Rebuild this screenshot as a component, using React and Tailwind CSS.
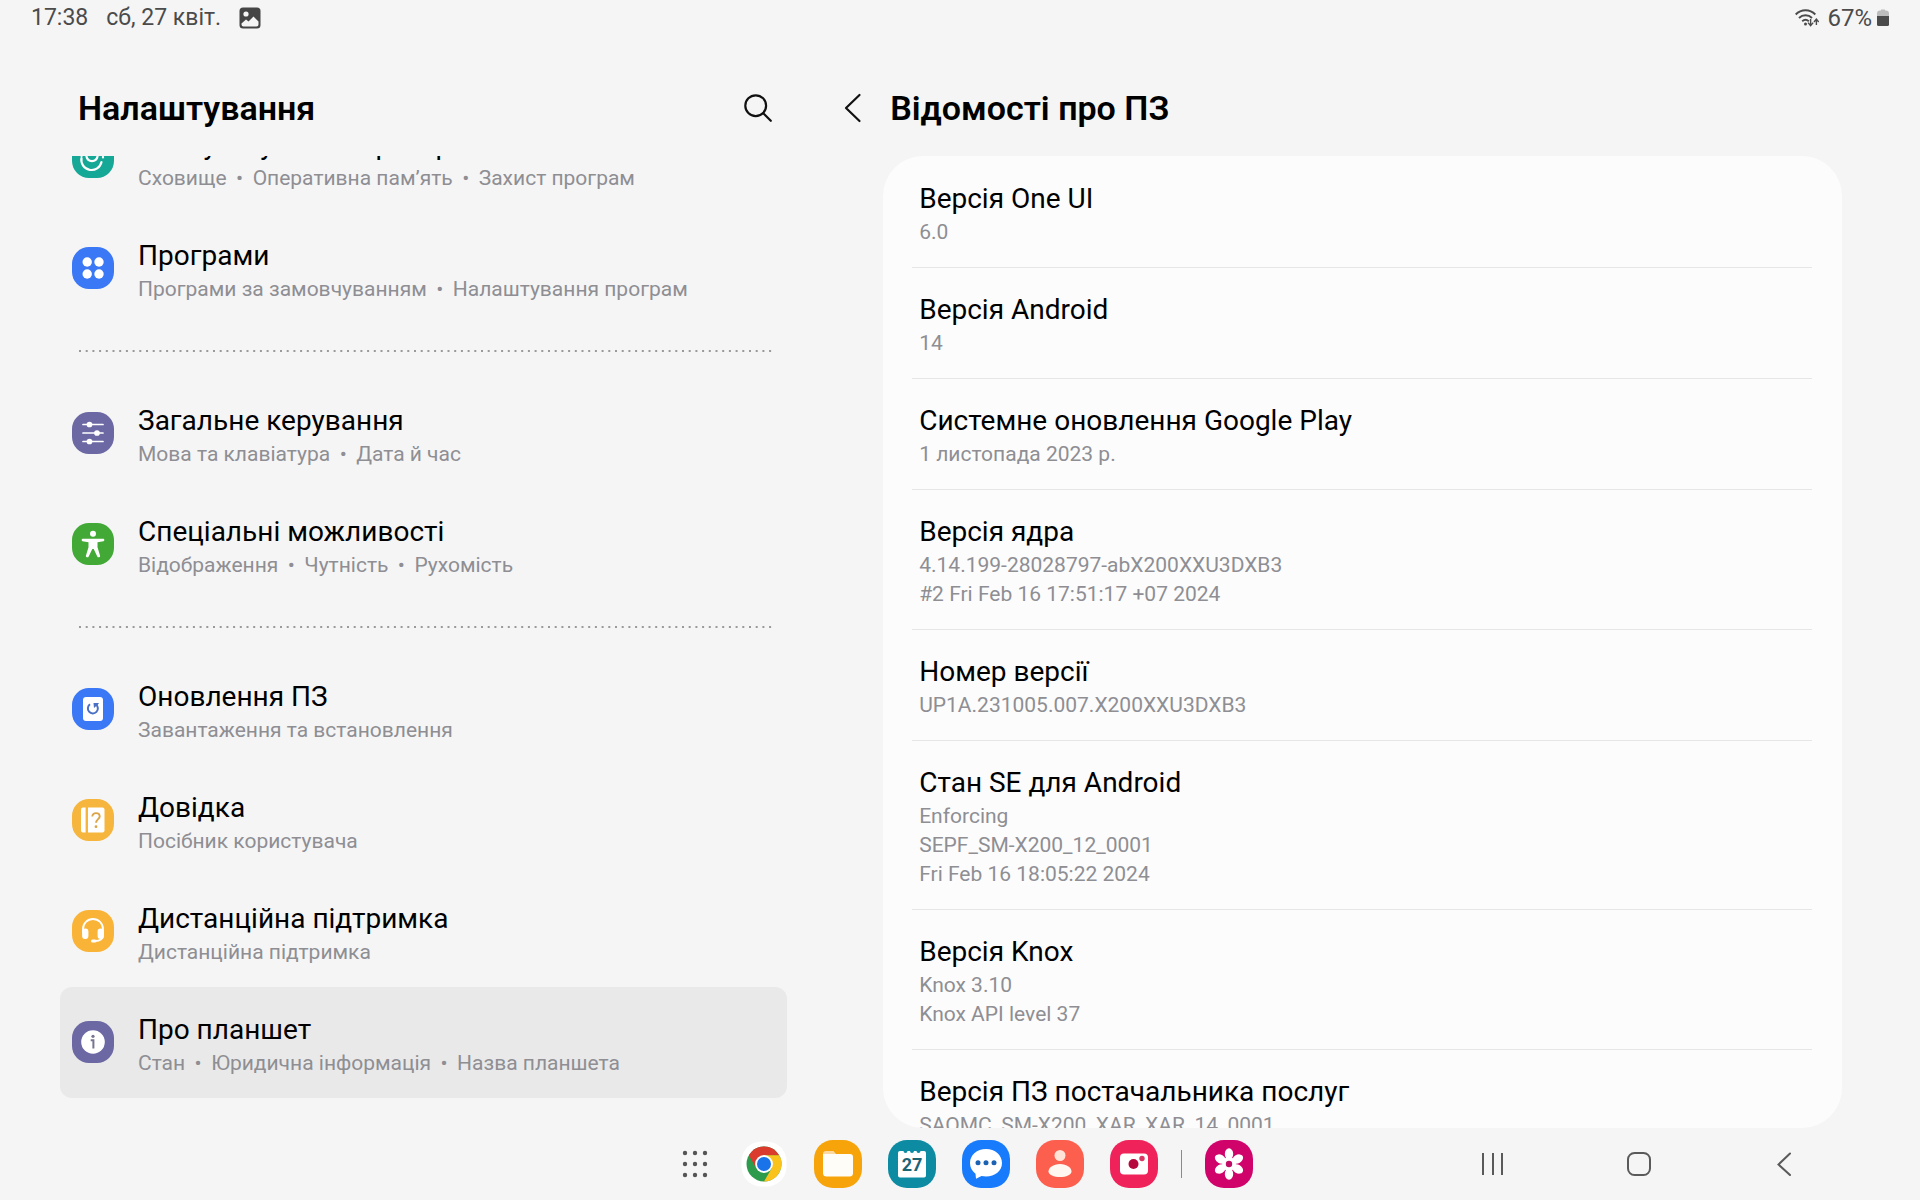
import React from 'react';

const settings = [
  {
    title: 'Обслуговування пристрою',
    details: ['Сховище', 'Оперативна памʼять', 'Захист програм'],
    color: 'bg-[#16a896]',
    icon: 'care',
  },
  {
    title: 'Програми',
    details: ['Програми за замовчуванням', 'Налаштування програм'],
    color: 'bg-[#3a78f6]',
    icon: 'apps',
    divider: true,
  },
  {
    title: 'Загальне керування',
    details: ['Мова та клавіатура', 'Дата й час'],
    color: 'bg-[#6b68a3]',
    icon: 'sliders',
  },
  {
    title: 'Спеціальні можливості',
    details: ['Відображення', 'Чутність', 'Рухомість'],
    color: 'bg-[#43a936]',
    icon: 'accessibility',
    divider: true,
  },
  {
    title: 'Оновлення ПЗ',
    details: ['Завантаження та встановлення'],
    color: 'bg-[#3a78f6]',
    icon: 'update',
  },
  {
    title: 'Довідка',
    details: ['Посібник користувача'],
    color: 'bg-[#f6b53c]',
    icon: 'manual',
  },
  {
    title: 'Дистанційна підтримка',
    details: ['Дистанційна підтримка'],
    color: 'bg-[#f9b438]',
    icon: 'support',
  },
  {
    title: 'Про планшет',
    details: ['Стан', 'Юридична інформація', 'Назва планшета'],
    color: 'bg-[#6b68a3]',
    icon: 'info',
    active: true,
  },
];

const software = [
  { title: 'Версія One UI', lines: ['6.0'] },
  { title: 'Версія Android', lines: ['14'] },
  { title: 'Системне оновлення Google Play', lines: ['1 листопада 2023 р.'] },
  { title: 'Версія ядра', lines: ['4.14.199-28028797-abX200XXU3DXB3', '#2 Fri Feb 16 17:51:17 +07 2024'] },
  { title: 'Номер версії', lines: ['UP1A.231005.007.X200XXU3DXB3'] },
  { title: 'Стан SE для Android', lines: ['Enforcing', 'SEPF_SM-X200_12_0001', 'Fri Feb 16 18:05:22 2024'] },
  { title: 'Версія Knox', lines: ['Knox 3.10', 'Knox API level 37'] },
  { title: 'Версія ПЗ постачальника послуг', lines: ['SAOMC_SM-X200_XAR_XAR_14_0001'] },
];

// 42x42 glyphs, drawn in white on the coloured tile
const glyphs = {
  care: (
    <g fill="none" stroke="#fff" strokeWidth="2.2" strokeLinecap="round">
      <path d="M9.5 22a10.2 10.2 0 0 0 20 4" />
      <path d="M14.500 20.500a5.600 5.600 0 0 0 11 0" />
      <path d="M9.500 20a10.200 10.200 0 0 1 18 -5" />
      <path d="M31 21v.5" />
    </g>
  ),
  apps: (
    <g fill="#fff">
      <circle cx="15.200" cy="15" r="4.700" />
      <circle cx="27" cy="15" r="4.700" />
      <circle cx="15.200" cy="27" r="4.700" />
      <circle cx="27" cy="27" r="4.700" />
    </g>
  ),
  sliders: (
    <g fill="#fff" stroke="#fff" strokeWidth="1.700" strokeLinecap="round">
      <path d="M11 12.500h20M11 21h20M11 29.500h20" />
      <circle cx="17.500" cy="12.500" r="2" />
      <circle cx="25" cy="21" r="2" />
      <circle cx="17.500" cy="29.500" r="2" />
    </g>
  ),
  accessibility: (
    <g fill="#fff">
      <circle cx="21" cy="10.700" r="3" />
      <path d="M10.500 15.700h21c1 0 1.200 2.300 0 2.600l-6 1v5l2.600 8.400c.3 1.700-2.200 2.300-2.800.8L21.700 26h-1.400l-3.600 7.500c-.6 1.500-3.100.9-2.800-.8l2.600-8.400v-5l-6-1c-1.200-.3-1-2.600 0-2.600z" />
    </g>
  ),
  update: (
    <g>
      <rect x="11" y="9" width="20" height="24" rx="3" fill="#fff" />
      <path d="M18 16.300a5 5 0 1 0 6 .2" fill="none" stroke="#4a70c4" strokeWidth="2" />
      <path d="M21.500 15h5.500l-1 1.500l-4 3.500z" fill="#4a70c4" />
    </g>
  ),
  manual: (
    <g>
      <path d="M11 8.500h2.600v25H11a2 2 0 0 1-2-2v-21a2 2 0 0 1 2-2z" fill="#fff" />
      <path d="M16 8.500h14.500a2 2 0 0 1 2 2v21a2 2 0 0 1-2 2H16z" fill="#fff" />
      <path d="M20.300 17.500c0-4.600 7.400-4.400 7.400 0c0 2.500-3.600 3-3.600 6.300" fill="none" stroke="#dba547" strokeWidth="1.900" />
      <circle cx="24" cy="27.700" r="1.400" fill="#dba547" />
    </g>
  ),
  support: (
    <g fill="none" stroke="#fff" strokeWidth="1.800" strokeLinecap="round">
      <path d="M11 22v-3a10 10 0 0 1 20 0v6c0 4-3 6-8 6" />
      <path d="M20.500 31h2.500" strokeWidth="3" />
      <rect x="11" y="19.500" width="4.500" height="8.500" rx="2" fill="#fff" />
      <rect x="26.500" y="19.500" width="4.500" height="8.500" rx="2" fill="#fff" />
    </g>
  ),
  info: (
    <g>
      <circle cx="21" cy="21" r="11.800" fill="#fff" />
      <circle cx="21" cy="15.300" r="1.600" fill="#77758f" />
      <path d="M18.700 19.300h2.700v8.200" fill="none" stroke="#77758f" strokeWidth="2" />
    </g>
  ),
};

function StatusBar() {
  return (
    <header className="flex h-9 shrink-0 items-center justify-between pl-[31px] pr-[31px] leading-9 text-[#4b4b4b]">
      <div className="flex items-center text-[23px]">
        <time>17:38</time>
        <span className="ml-[18px]">сб, 27 квіт.</span>
        <svg className="ml-[18px] size-[22px]" viewBox="0 0 22 22">
          <rect x=".5" y=".5" width="21" height="21" rx="3.500" fill="#454545" />
          <circle cx="7" cy="7" r="2.600" fill="#f5f5f5" />
          <path d="M2.500 16.500L7 12.500l2.500 2l5-5l5 5v3a2 2 0 0 1-2 2h-13a2 2 0 0 1-2-2z" fill="#f5f5f5" />
        </svg>
      </div>
      <div className="flex items-center text-[24px]">
        <svg className="mr-2 h-[18px] w-6" viewBox="0 0 24 18">
          <g fill="none" stroke="#4b4b4b" strokeWidth="1.900">
            <path d="M.7 5.500a13.500 13.500 0 0 1 19.600 0" />
            <path d="M4 9a9 9 0 0 1 13 0" />
            <path d="M7.200 12.200a5 5 0 0 1 6.600 0" />
          </g>
          <circle cx="10.500" cy="15" r="1.500" fill="#4b4b4b" />
          <path d="M15.600 10v6M13 13.600l2.600 3l2.600-3M21.400 16v-5M19 13l2.400-3l2.400 3" fill="none" stroke="#4b4b4b" strokeWidth="1.400" />
        </svg>
        <span>67%</span>
        <svg className="ml-[5px] h-[18px] w-3" viewBox="0 0 12 18">
          <path d="M3 1.500h1V.5h4v1h1a3 3 0 0 1 3 3V7H0V4.500a3 3 0 0 1 3-3z" fill="#bcbcbc" />
          <path d="M0 7h12v8.500a1.500 1.500 0 0 1-1.500 1.500h-9A1.500 1.500 0 0 1 0 15.500z" fill="#4b4b4b" />
        </svg>
      </div>
    </header>
  );
}

function SettingRow({ item }) {
  return (
    <li>
      <a
        href="#"
        aria-current={item.active ? 'page' : undefined}
        className={`flex items-center rounded-xl pl-3 pt-[23px] pb-5 ${item.active ? 'bg-[#e9e9ea]' : ''}`}
      >
        <span className={`mr-6 mb-1 size-[42px] shrink-0 rounded-[17px] ${item.color}`}>
          <svg className="size-full" viewBox="0 0 42 42">{glyphs[item.icon]}</svg>
        </span>
        <span className="flex flex-col whitespace-nowrap">
          <span className="text-[28px] leading-[39px] text-black">{item.title}</span>
          <span className="flex text-[21px] leading-[29px] text-[#8e8e93]">
            {item.details.map((detail, i) => (
              <React.Fragment key={detail}>
                {i > 0 && <span className="w-[26px] text-center">•</span>}
                <span>{detail}</span>
              </React.Fragment>
            ))}
          </span>
        </span>
      </a>
      {item.divider && (
        <div className="ml-[18px] mr-3 flex h-[54px] items-center">
          <svg className="h-[2px] w-full">
            <line x1="1" y1="1" x2="100%" y2="1" stroke="#9a9a9a" strokeWidth="2" strokeDasharray="2 4.700" />
          </svg>
        </div>
      )}
    </li>
  );
}

function SettingsList() {
  return (
    <section className="flex w-[41%] shrink-0 flex-col pl-[60px]">
      <div className="flex h-[120px] shrink-0 items-center justify-between pl-[18px] pr-[14px] pt-6">
        <h1 className="text-[34px] leading-10 font-semibold text-black">Налаштування</h1>
        <button type="button" aria-label="Пошук">
          <svg className="size-[30px]" viewBox="0 0 30 30" fill="none" stroke="#111" strokeWidth="2.200" strokeLinecap="round">
            <circle cx="12.700" cy="12.700" r="10.400" />
            <path d="M20.300 20.300l7.500 7.500" />
          </svg>
        </button>
      </div>
      {/* List is scrolled, so the first row sits half under the header */}
      <div className="min-h-0 flex-1 overflow-hidden">
        <ul className="-mt-[54px]">
          {settings.map((item) => (
            <SettingRow key={item.title} item={item} />
          ))}
        </ul>
      </div>
    </section>
  );
}

function SoftwareInfo() {
  return (
    <section className="flex min-w-0 flex-1 flex-col pl-[57px] pr-[78px]">
      <div className="flex h-[120px] shrink-0 items-center pt-6">
        <button type="button" aria-label="Назад" className="mr-7">
          <svg className="h-[30px] w-[18px]" viewBox="0 0 18 30" fill="none" stroke="#111" strokeWidth="2.200" strokeLinecap="round" strokeLinejoin="round">
            <path d="M15.500 2L2 15l13.500 13" />
          </svg>
        </button>
        <h2 className="text-[34px] leading-10 font-semibold text-black">Відомості про ПЗ</h2>
      </div>
      <div className="ml-[39px] min-h-0 flex-1 overflow-hidden rounded-[40px] bg-[#fcfcfd]">
        <dl className="ml-[29px] mr-[30px] pt-px">
          {software.map((item) => (
            <div key={item.title} className="border-b border-[#e6e6e8] pl-[7px] pt-[22px] pb-5">
              <dt className="text-[28px] leading-[39px] text-black">{item.title}</dt>
              {item.lines.map((line) => (
                <dd key={line} className="text-[21px] leading-[29px] text-[#8e8e93]">{line}</dd>
              ))}
            </div>
          ))}
        </dl>
      </div>
    </section>
  );
}

function DockButton({ label, color, children }) {
  return (
    <button type="button" aria-label={label} className={`size-12 overflow-hidden rounded-[19px] ${color}`}>
      <svg className="size-full" viewBox="0 0 48 48">{children}</svg>
    </button>
  );
}

function NavBar() {
  return (
    <nav className="grid h-[72px] shrink-0 grid-cols-[1fr_auto_1fr] items-center pl-[14px]">
      <span />
      <div className="flex items-center gap-[26px]">
        <button type="button" aria-label="Усі програми" className="mr-[5px]">
          <svg className="size-7" viewBox="0 0 28 28" fill="#555">
            {[3, 14, 25].map((y) => [4, 14, 24].map((x) => <circle key={`${x}-${y}`} cx={x} cy={y} r="2.200" />))}
          </svg>
        </button>
        <DockButton label="Chrome" color="bg-transparent">
          <rect x="1.500" y="1.500" width="45" height="45" rx="20" fill="#fff" />
          <circle cx="24" cy="24" r="17.500" fill="#2c9b4c" />
          <path d="M8.800 15.250A17.500 17.500 0 0 1 39.200 15.250L24 15.250L16.400 28.400z" fill="#da3b2d" />
          <path d="M39.200 15.250A17.500 17.500 0 0 1 24 41.500L31.600 28.400L24 15.250z" fill="#fac31c" />
          <circle cx="24" cy="24" r="8.900" fill="#fff" />
          <circle cx="24" cy="24" r="7" fill="#1a73e8" />
        </DockButton>
        <DockButton label="Мої файли" color="bg-[#f6a409]">
          <path d="M9 14a3 3 0 0 1 3-3h7.500l2.500 3v4H9z" fill="#fbd9a0" />
          <path d="M9 14h27a3 3 0 0 1 3 3V33a3.500 3.500 0 0 1-3.500 3.500h-23A3.500 3.500 0 0 1 9 33z" fill="#fffdf8" />
        </DockButton>
        <DockButton label="Календар" color="bg-[#0c8ba3]">
          <path d="M12 11h3.500a2 2 0 0 0 4 0h2.500a2 2 0 0 0 4 0h2.500a2 2 0 0 0 4 0H36a2 2 0 0 1 2 2v22.500a2 2 0 0 1-2 2H12a2 2 0 0 1-2-2V13a2 2 0 0 1 2-2z" fill="#fff" />
          <text x="24" y="31" textAnchor="middle" fontSize="18" fontWeight="700" fill="#1c6374">27</text>
        </DockButton>
        <DockButton label="Повідомлення" color="bg-[#187bfb]">
          <path d="M24 9c9 0 16 6 16 14s-7 13.500-16 13.500c-1.500 0-3-.2-4.500-.5L14 38.700l-.5-5C10 31 8 27.500 8 23C8 15 15 9 24 9z" fill="#fff" />
          <g fill="#1b62b5">
            <circle cx="16" cy="22.700" r="2.500" />
            <circle cx="24" cy="22.700" r="2.500" />
            <circle cx="32" cy="22.700" r="2.500" />
          </g>
        </DockButton>
        <DockButton label="Контакти" color="bg-[#fd5f4e]">
          <circle cx="24" cy="15.500" r="5.500" fill="#ffe3d6" />
          <path d="M24 24c7 0 11.500 4 11.500 7.500S30 37 24 37s-11.500-2-11.500-5.500S17 24 24 24z" fill="#fff7f0" />
        </DockButton>
        <DockButton label="Камера" color="bg-[#ef2259]">
          <rect x="10" y="13.500" width="28" height="21" rx="4" fill="#fff" />
          <circle cx="23.500" cy="24" r="5" fill="#b5083c" />
          <circle cx="32" cy="18.500" r="2.700" fill="#d83762" />
        </DockButton>
        <span className="-mx-[3px] h-7 w-px bg-[#8a8a8a]" />
        <DockButton label="Галерея" color="bg-[#d0036b]">
          <g fill="#fff">
            {[0, 60, 120, 180, 240, 300].map((angle) => (
              <ellipse key={angle} cx="24" cy="14" rx="4.200" ry="5.800" transform={`rotate(${angle} 24 24)`} />
            ))}
            <circle cx="24" cy="24" r="7" />
          </g>
          <circle cx="24" cy="24" r="3.200" fill="#c00c64" />
        </DockButton>
      </div>
      <div className="flex justify-end pr-[62px]">
        <button type="button" aria-label="Останні" className="flex w-[146px] justify-center">
          <svg className="size-6" viewBox="0 0 24 24" stroke="#5a5a5a" strokeWidth="2">
            <path d="M2 1v22M12 1v22M21 1v22" />
          </svg>
        </button>
        <button type="button" aria-label="Головний екран" className="flex w-[146px] justify-center">
          <svg className="size-6" viewBox="0 0 24 24" fill="none" stroke="#5a5a5a" strokeWidth="2">
            <rect x="1" y="1" width="22" height="22" rx="6.500" />
          </svg>
        </button>
        <button type="button" aria-label="Назад" className="flex w-[146px] justify-center">
          <svg className="size-6" viewBox="0 0 24 24" fill="none" stroke="#5a5a5a" strokeWidth="2" strokeLinecap="round">
            <path d="M17 1.500L5.500 12.500L17 23" />
          </svg>
        </button>
      </div>
    </nav>
  );
}

export default function App() {
  return (
    <div className="flex h-screen flex-col overflow-hidden bg-[#f5f5f6] font-['Roboto',sans-serif]">
      <StatusBar />
      <main className="flex min-h-0 flex-1">
        <SettingsList />
        <SoftwareInfo />
      </main>
      <NavBar />
    </div>
  );
}
